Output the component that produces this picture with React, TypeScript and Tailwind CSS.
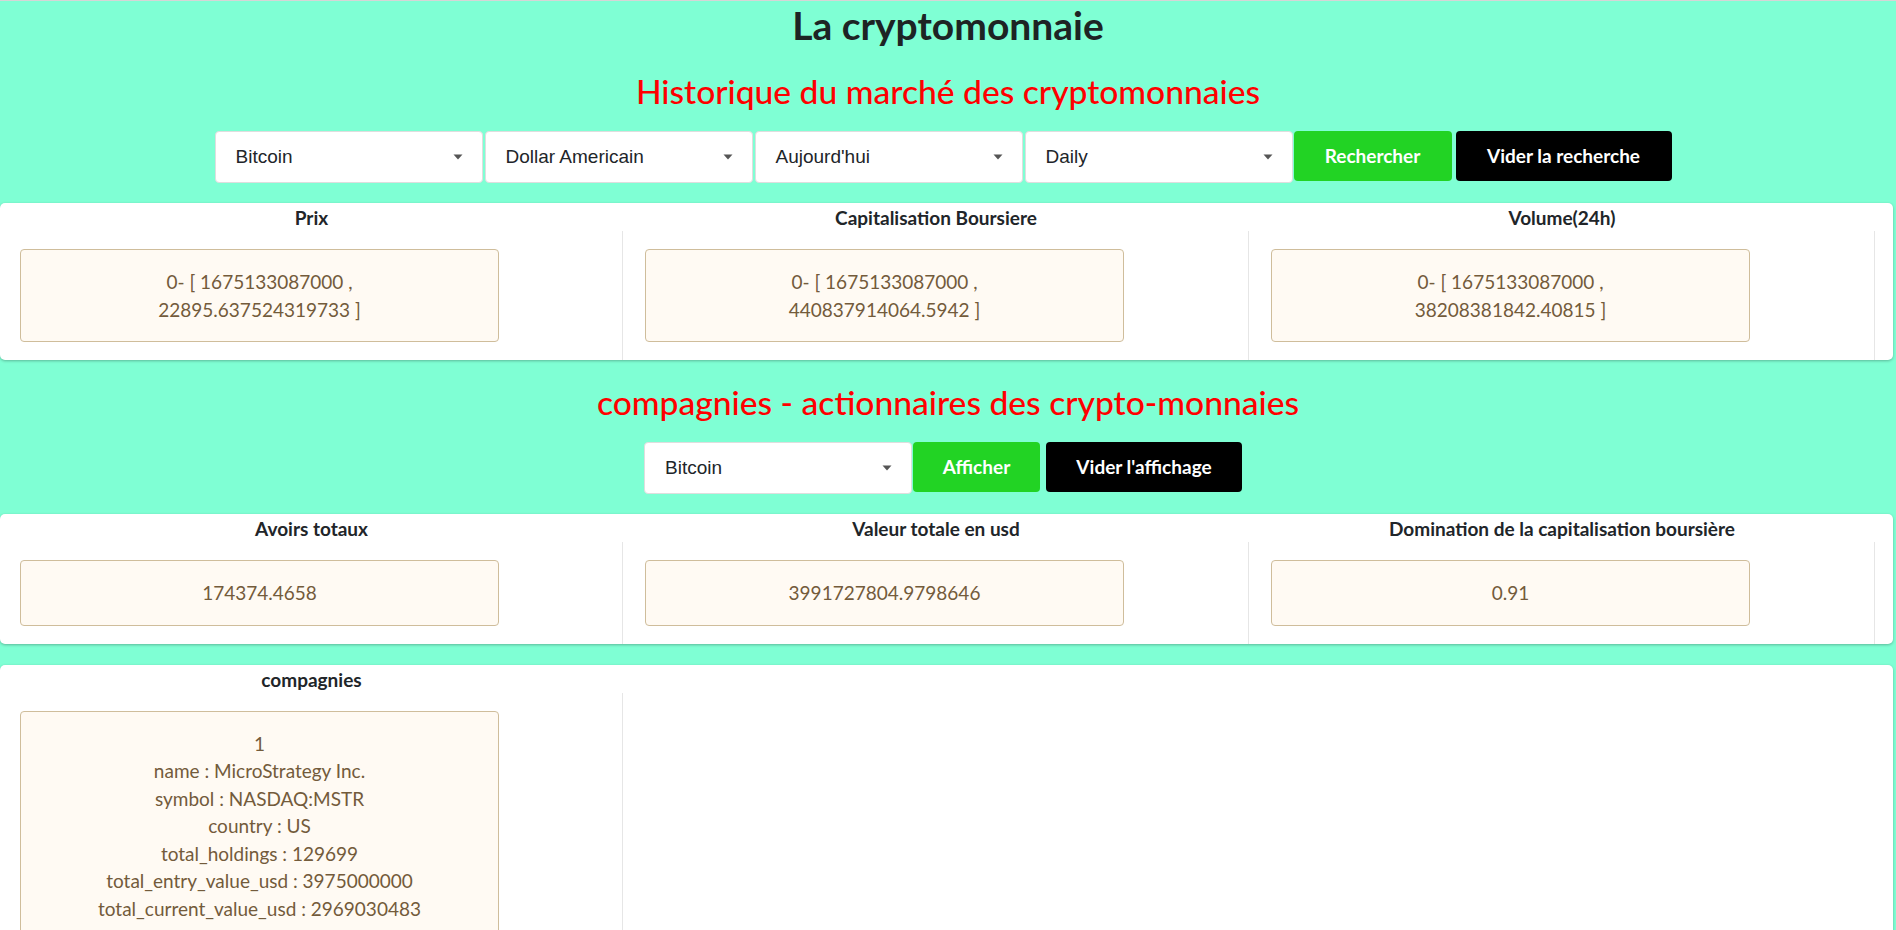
import React from "react";

function Caret() {
  return (
    <svg width="10" height="6" viewBox="0 0 10 6" className="shrink-0">
      <path d="M0.5 0.5 L9.5 0.5 L5 5.5 Z" fill="#555555" />
    </svg>
  );
}

function FakeSelect({ label }: { label: string }) {
  return (
    <div className="flex h-[52px] w-[268px] shrink-0 items-center justify-between rounded-[4px] border border-[#dedede] bg-white pl-[20px] pr-[19px] font-['Liberation_Sans',Arial,sans-serif] text-[19px] text-[#212529]">
      <span>{label}</span>
      <Caret />
    </div>
  );
}

function Btn({ label, w, green }: { label: string; w: string; green?: boolean }) {
  return (
    <div
      className={
        (green ? "bg-[#22d324] " : "bg-black ") +
        w +
        " flex h-[50px] shrink-0 items-center justify-center rounded-[4px] text-[19px] font-bold text-white"
      }
    >
      {label}
    </div>
  );
}

function ValueBox({ children }: { children: React.ReactNode }) {
  return (
    <div className="w-[479px] rounded-[4px] border border-[#cfbd9b] bg-[#fffaf3] py-[18px] text-center text-[19px] leading-[27.5px] text-[#735b3b]">
      {children}
    </div>
  );
}

function Card({
  headers,
  cells,
}: {
  headers: string[];
  cells: React.ReactNode[];
}) {
  const pads = ["pl-[20px]", "pl-[22px]", "pl-[22px]"];
  return (
    <div className="mr-[3px] rounded-[5px] bg-white shadow-[0_1px_3px_rgba(0,0,0,0.28)]">
      <div className="grid grid-cols-[623px_626px_626px_1fr]">
        {headers.map((h, i) => (
          <div
            key={"h" + i}
            className="flex h-[28px] items-end justify-center pb-[1px] text-[19px] font-bold leading-[24px] text-[#212529]"
          >
            {h}
          </div>
        ))}
        <div />
        {cells.map((c, i) => (
          <div
            key={"c" + i}
            className={pads[i] + " border-r border-[#e6e6e6] pb-[18px] pt-[18px]"}
          >
            {c}
          </div>
        ))}
        <div />
      </div>
    </div>
  );
}

function CompanyCard() {
  return (
    <div className="mr-[3px] rounded-[5px] bg-white shadow-[0_1px_3px_rgba(0,0,0,0.28)]">
      <div className="grid grid-cols-[623px_1fr]">
        <div className="flex h-[28px] items-end justify-center pb-[1px] text-[19px] font-bold leading-[24px] text-[#212529]">
          compagnies
        </div>
        <div />
        <div className="border-r border-[#e6e6e6] pb-[18px] pl-[20px] pt-[18px]">
          <ValueBox>
            <div>1</div>
            <div>name : MicroStrategy Inc.</div>
            <div>symbol : NASDAQ:MSTR</div>
            <div>country : US</div>
            <div>total_holdings : 129699</div>
            <div>total_entry_value_usd : 3975000000</div>
            <div>total_current_value_usd : 2969030483</div>
          </ValueBox>
        </div>
        <div />
      </div>
    </div>
  );
}

export default function App() {
  return (
    <div className="min-h-screen border-t border-[#d6d6d6] bg-[#7fffd4] font-['Lato',sans-serif]">
      <h1 className="pt-[1px] text-center text-[39px] font-bold leading-[47px] text-[#1d2424]">
        La cryptomonnaie
      </h1>
      <h2 className="mt-[22px] text-center text-[33.6px] font-medium leading-[40px] text-[#ff0000]">
        Historique du marché des cryptomonnaies
      </h2>
      <div className="mt-[20px] flex items-start justify-center pr-[10px]">
        <FakeSelect label="Bitcoin" />
        <div className="w-[2px]" />
        <FakeSelect label="Dollar Americain" />
        <div className="w-[2px]" />
        <FakeSelect label="Aujourd'hui" />
        <div className="w-[2px]" />
        <FakeSelect label="Daily" />
        <div className="w-[1px]" />
        <Btn label="Rechercher" w="w-[158px]" green />
        <div className="w-[4px]" />
        <Btn label="Vider la recherche" w="w-[216px]" />
      </div>
      <div className="mt-[20px]">
        <Card
          headers={["Prix", "Capitalisation Boursiere", "Volume(24h)"]}
          cells={[
            <ValueBox key="a">
              <div>0- [ 1675133087000 ,</div>
              <div>22895.637524319733 ]</div>
            </ValueBox>,
            <ValueBox key="b">
              <div>0- [ 1675133087000 ,</div>
              <div>440837914064.5942 ]</div>
            </ValueBox>,
            <ValueBox key="c">
              <div>0- [ 1675133087000 ,</div>
              <div>38208381842.40815 ]</div>
            </ValueBox>,
          ]}
        />
      </div>
      <h2 className="mt-[22px] text-center text-[33.6px] font-medium leading-[40px] text-[#ff0000]">
        compagnies - actionnaires des crypto-monnaies
      </h2>
      <div className="mt-[20px] flex items-start justify-center pr-[10px]">
        <FakeSelect label="Bitcoin" />
        <div className="w-[1px]" />
        <Btn label="Afficher" w="w-[127px]" green />
        <div className="w-[6px]" />
        <Btn label="Vider l'affichage" w="w-[196px]" />
      </div>
      <div className="mt-[20px]">
        <Card
          headers={[
            "Avoirs totaux",
            "Valeur totale en usd",
            "Domination de la capitalisation boursière",
          ]}
          cells={[
            <ValueBox key="a">174374.4658</ValueBox>,
            <ValueBox key="b">3991727804.9798646</ValueBox>,
            <ValueBox key="c">0.91</ValueBox>,
          ]}
        />
      </div>
      <div className="mt-[21px]">
        <CompanyCard />
      </div>
    </div>
  );
}
